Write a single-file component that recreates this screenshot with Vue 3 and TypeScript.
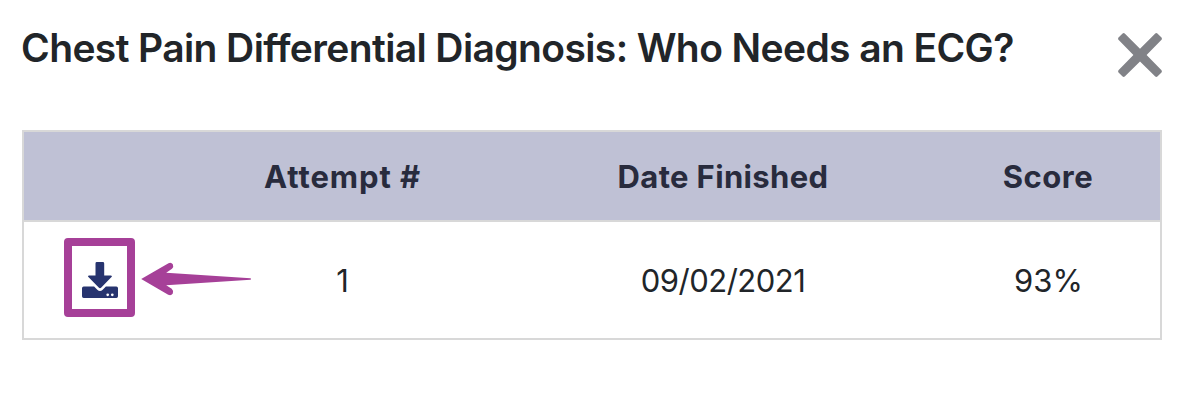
<script setup lang="ts">
interface Attempt {
  id: number
  finished: string
  score: string
}

const attempts: Attempt[] = [{ id: 1, finished: '09/02/2021', score: '93%' }]
</script>

<template>
  <main class="dialog">
    <header class="top">
      <h1 class="title">Chest Pain Differential Diagnosis: Who Needs an ECG?</h1>
      <button class="close" type="button" aria-label="Close">
        <svg width="44" height="44" viewBox="0 0 44 44">
          <path
            d="M4.6 0.5Q5.8-.4 7 .7L22 15.7 37 .7Q38.2-.4 39.4.5L43.5 4.6Q44.4 5.8 43.3 7L28.6 22 43.3 37Q44.4 38.2 43.5 39.4L39.4 43.5Q38.2 44.4 37 43.3L22 28.6 7 43.3Q5.8 44.4 4.6 43.5L.5 39.4Q-.4 38.2.7 37L15.4 22 .7 7Q-.4 5.8.5 4.6Z"
            fill="#818287"
          />
        </svg>
      </button>
    </header>

    <section class="grid">
      <div class="row head">
        <span></span>
        <span class="h-attempt">Attempt #</span>
        <span class="h-date">Date Finished</span>
        <span class="h-score">Score</span>
      </div>
      <div v-for="a in attempts" :key="a.id" class="row body">
        <div class="action">
          <button class="download" type="button" aria-label="Download">
            <svg width="36" height="36" viewBox="0 0 36 36">
              <path
                d="M14.8 0H20.8Q22.2 0 22.2 1.4V13.5H28.8Q30.8 13.5 29.5 15L19.3 25.5Q18 26.8 16.7 25.5L6.4 15Q5.2 13.5 7 13.5H13.5V1.4Q13.5 0 14.8 0Z"
                fill="#27346f"
              />
              <path
                d="M1.7 24.6H12.1L15.3 27.8Q18 30.3 20.7 27.8L23.9 24.6H34.3Q36 24.6 36 26.3V34.3Q36 36 34.3 36H1.7Q0 36 0 34.3V26.3Q0 24.6 1.7 24.6Z"
                fill="#27346f"
              />
              <circle cx="25.7" cy="32.8" r="1.35" fill="#fff" />
              <circle cx="30.3" cy="32.8" r="1.35" fill="#fff" />
            </svg>
          </button>
          <svg class="pointer" width="112" height="36" viewBox="0 0 112 36">
            <path
              d="M1.2 19L28.5 3.2Q31.3 2 32.8 4.3Q34 6.8 32 8.8L26.2 12.8 110.5 18.2Q111.8 19 110.5 19.8L26.2 25.2 31.7 28.8Q34 31 32.8 33.6Q31 36 28.2 34.7Z"
              fill="#a64098"
            />
          </svg>
        </div>
        <span>{{ a.id }}</span>
        <span class="c-date">{{ a.finished }}</span>
        <span class="c-score">{{ a.score }}</span>
      </div>
    </section>
  </main>
</template>

<style>
body {
  margin: 0;
  background: #fff;
}
</style>

<style scoped>
.dialog {
  box-sizing: border-box;
  width: 1182px;
  height: 402px;
  padding: 24px 20px 0 22px;
  background: #fff;
  color: #212529;
  font-family: Inter, "Liberation Sans", sans-serif;
}
.top {
  display: flex;
  justify-content: space-between;
  height: 106px;
}
.title {
  margin: 0 0 0 -1px;
  font-size: 39px;
  font-weight: 600;
  line-height: 48px;
  letter-spacing: -0.61px;
  white-space: nowrap;
}
.close {
  width: 44px;
  height: 44px;
  margin: 9px 0 0;
  padding: 0;
  border: 0;
  background: none;
}
svg {
  display: block;
}
.grid {
  border: 2px solid #d8d8d8;
}
.row {
  display: grid;
  grid-template-columns: 151px 335px 426px 224px;
  align-items: center;
  justify-items: center;
  font-size: 31px;
  white-space: nowrap;
}
.head {
  height: 88px;
  border-bottom: 2px solid #d8d8d8;
  background: #bfc1d5;
  color: #282b3d;
  font-weight: 700;
}
.h-attempt {
  letter-spacing: 0.9px;
}
.h-date {
  letter-spacing: 0.35px;
}
.h-score {
  letter-spacing: 0.5px;
}
.body {
  height: 116px;
}
.c-date {
  letter-spacing: -0.5px;
}
.c-score {
  padding-left: 1px;
}
.action {
  position: relative;
}
.download {
  box-sizing: border-box;
  display: flex;
  align-items: center;
  justify-content: center;
  width: 71px;
  height: 79px;
  margin-bottom: 5px;
  padding: 5px 0 0 1px;
  border: 8px solid #a64098;
  border-radius: 4px;
  background: #fff;
}
.pointer {
  position: absolute;
  left: 76px;
  top: 22px;
}
</style>
